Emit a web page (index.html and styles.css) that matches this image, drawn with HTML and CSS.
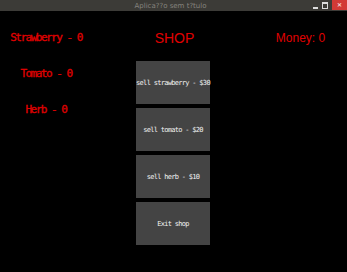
FILE: index.html
```html
<!DOCTYPE html>
<html lang="pt">
<head>
    <meta charset="UTF-8">
    <meta name="viewport" content="width=device-width, initial-scale=1.0">
    <title>Aplica??o sem t?tulo</title>
    <link rel="stylesheet" href="styles.css">
</head>
<body>

    <div class="titlebar">
        <span class="title">Aplica??o sem t?tulo</span>
        <div class="win-controls">
            <span class="win-min"></span>
            <span class="win-max"></span>
            <span class="win-close">&#x2715;</span>
        </div>
    </div>

    <div class="game">
        <div class="stock">
            <p>Strawberry - 0</p>
            <p>Tomato - 0</p>
            <p>Herb - 0</p>
        </div>

        <div class="shop">
            <h1>SHOP</h1>
            <button type="button">sell strawberry - $30</button>
            <button type="button">sell tomato - $20</button>
            <button type="button">sell herb - $10</button>
            <button type="button">Exit shop</button>
        </div>

        <div class="wallet">
            <p>Money: 0</p>
        </div>
    </div>

</body>
</html>
```

FILE: styles.css
```css
body {
    font-family: 'Liberation Sans', sans-serif;
    background-color: #000;
    color: #e00000;
    margin: 0;
    padding: 0;
    width: 347px;
    height: 272px;
    overflow: hidden;
}

.titlebar {
    height: 11px;
    background-color: #3c3b37;
    display: flex;
    align-items: center;
    justify-content: center;
    position: relative;
}

.title {
    font-family: 'DejaVu Sans', sans-serif;
    font-size: 7px;
    color: #85837e;
    margin-left: -6px;
}

.win-controls {
    position: absolute;
    right: 0;
    top: 0;
    height: 10px;
    display: flex;
    align-items: center;
    gap: 4px;
}

.win-min {
    width: 5px;
    height: 2px;
    margin-top: 5px;
    background-color: #dcdcdc;
}

.win-max {
    width: 4px;
    height: 4px;
    border: 1px solid #dcdcdc;
    border-top-width: 2px;
}

.win-close {
    width: 15px;
    height: 10px;
    background-color: #d23a36;
    color: #f4d0cf;
    font-size: 6px;
    font-weight: bold;
    line-height: 10px;
    text-align: center;
}

.game {
    display: grid;
    grid-template-columns: 92px 162px 1fr;
    padding-top: 20px;
}

.stock {
    display: flex;
    flex-direction: column;
    align-items: center;
    gap: 22px;
}

.stock p {
    margin: 0;
    font-family: 'DejaVu Sans Mono', monospace;
    font-size: 11px;
    letter-spacing: -1.5px;
    line-height: 14px;
    -webkit-text-stroke: 0.3px #e00000;
}

.shop {
    display: flex;
    flex-direction: column;
    align-items: center;
    gap: 4px;
}

.shop h1 {
    margin: 0 0 12px 3px;
    font-size: 14px;
    font-weight: normal;
    line-height: 14px;
}

button {
    width: 74px;
    height: 43px;
    padding: 0;
    border: none;
    background-color: #444;
    color: #f2f2f2;
    font-family: 'DejaVu Sans Mono', monospace;
    font-size: 7px;
    letter-spacing: -0.7px;
    cursor: pointer;
}

    button:hover {
        background-color: #4e4e4e;
    }

.wallet {
    text-align: center;
}

    .wallet p {
        margin: 0;
        font-size: 12px;
        line-height: 14px;
    }
```
